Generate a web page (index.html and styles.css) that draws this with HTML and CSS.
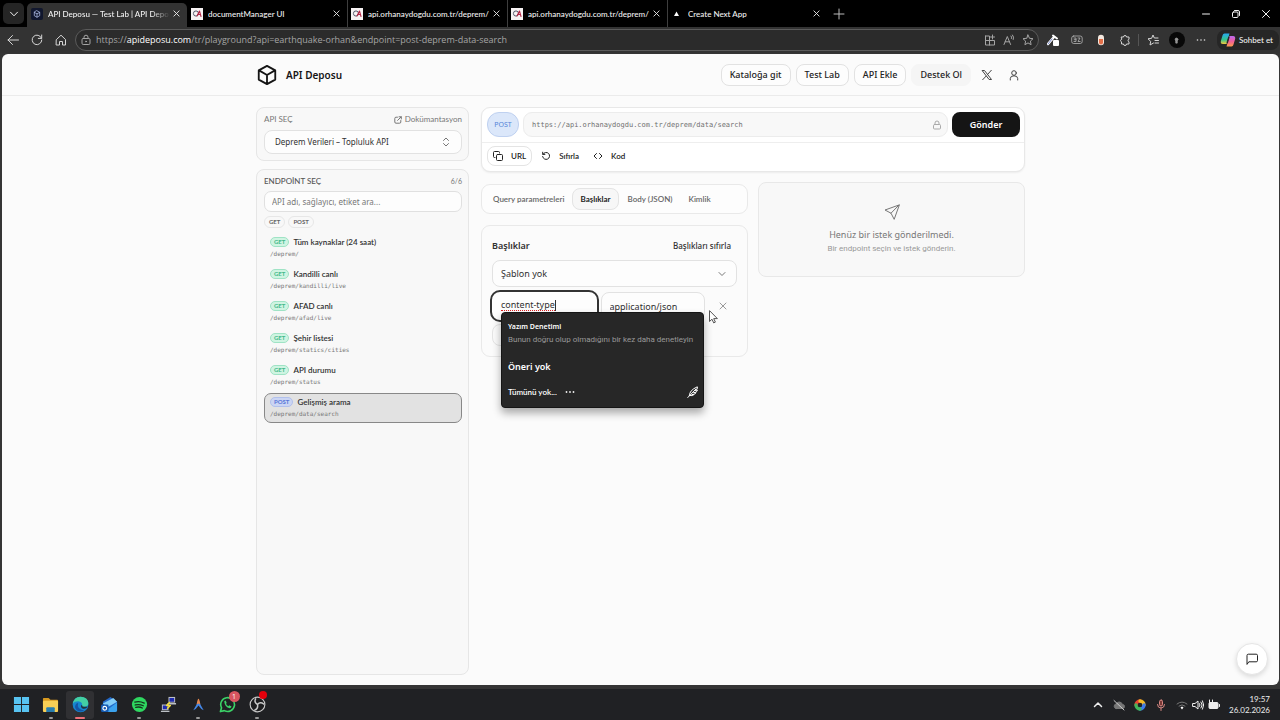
FILE: index.html
```html
<!DOCTYPE html>
<html lang="tr">
<head>
<meta charset="utf-8">
<title>API Deposu — Test Lab</title>
<link rel="stylesheet" href="styles.css">
</head>
<body>
<div class="tabstrip">
  <button class="tab-menu" aria-label="Sekmeler"><svg width="10" height="10" viewBox="0 0 10 10"><path d="M1.5 3.2 5 6.8l3.500-3.600"/></svg></button>
  <div class="tabs">
    <div class="tab tab-active">
      <svg class="fav" viewBox="0 0 12 12"><rect width="12" height="12" rx="2" fill="#11172e"/><path d="M6 2.800 8.700 4.300v3.400L6 9.200 3.300 7.700V4.300zM3.300 4.300 6 5.900l2.700-1.600M6 5.900v3.300" fill="none" stroke="#a9b7df" stroke-width=".8"/></svg>
      <span class="tab-title fade">API Deposu — Test Lab | API Depo</span>
      <button class="x" aria-label="Kapat"><svg viewBox="0 0 8 8"><path d="m1 1 6 6M7 1 1 7"/></svg></button>
    </div>
    <div class="tab">
      <svg class="fav" viewBox="0 0 12 12"><rect width="12" height="12" fill="#f6f2f3"/><circle cx="5" cy="5.500" r="2.600" fill="none" stroke="#555b6d"/><path d="m6 8 2.500-5L10 8.500M6.500 6.500h3" fill="none" stroke="#b52848" stroke-width="1.100"/></svg>
      <span class="tab-title">documentManager UI</span>
      <button class="x" aria-label="Kapat"><svg viewBox="0 0 8 8"><path d="m1 1 6 6M7 1 1 7"/></svg></button>
    </div>
    <div class="tab tab-line">
      <svg class="fav" viewBox="0 0 12 12"><rect width="12" height="12" fill="#f6f2f3"/><circle cx="5" cy="5.500" r="2.600" fill="none" stroke="#555b6d"/><path d="m6 8 2.500-5L10 8.500M6.500 6.500h3" fill="none" stroke="#b52848" stroke-width="1.100"/></svg>
      <span class="tab-title">api.orhanaydogdu.com.tr/deprem/</span>
      <button class="x" aria-label="Kapat"><svg viewBox="0 0 8 8"><path d="m1 1 6 6M7 1 1 7"/></svg></button>
    </div>
    <div class="tab tab-line">
      <svg class="fav" viewBox="0 0 12 12"><rect width="12" height="12" fill="#f6f2f3"/><circle cx="5" cy="5.500" r="2.600" fill="none" stroke="#555b6d"/><path d="m6 8 2.500-5L10 8.500M6.500 6.500h3" fill="none" stroke="#b52848" stroke-width="1.100"/></svg>
      <span class="tab-title">api.orhanaydogdu.com.tr/deprem/</span>
      <button class="x" aria-label="Kapat"><svg viewBox="0 0 8 8"><path d="m1 1 6 6M7 1 1 7"/></svg></button>
    </div>
    <div class="tab tab-line">
      <svg class="fav" viewBox="0 0 12 12"><path d="M5.500 3.500 8 8H3z" fill="#fff"/></svg>
      <span class="tab-title">Create Next App</span>
      <button class="x" aria-label="Kapat"><svg viewBox="0 0 8 8"><path d="m1 1 6 6M7 1 1 7"/></svg></button>
    </div>
  </div>
  <button class="new-tab" aria-label="Yeni sekme"><svg width="12" height="12" viewBox="0 0 12 12"><path d="M6 1v10M1 6h10"/></svg></button>
  <div class="win-controls">
    <button aria-label="Küçült"><svg viewBox="0 0 10 10"><path d="M1.500 5h7"/></svg></button>
    <button aria-label="Geri yükle"><svg viewBox="0 0 10 10"><rect x="1.500" y="3" width="5.500" height="5.500" rx="1"/><path d="M3.500 1.500H7a1.500 1.500 0 0 1 1.500 1.500v3.500"/></svg></button>
    <button aria-label="Kapat"><svg viewBox="0 0 10 10"><path d="m1.500 1.500 7 7M8.500 1.500l-7 7"/></svg></button>
  </div>
</div>

<div class="toolbar">
  <button class="nav-btn" aria-label="Geri"><svg viewBox="0 0 12 12"><path d="M11.500 6H1M5.500 1.500 1 6l4.500 4.500"/></svg></button>
  <button class="nav-btn" aria-label="Yenile"><svg viewBox="0 0 12 12"><path d="M10.500 4.200A4.800 4.800 0 1 0 10.800 6M10.700 1v3.400H7.300"/></svg></button>
  <button class="nav-btn" aria-label="Giriş"><svg viewBox="0 0 12 12"><path d="M1.500 5.500 6 1.200l4.500 4.300V11H7.500V7.500h-3V11h-3z"/></svg></button>
  <div class="address">
    <svg class="addr-ico" viewBox="0 0 12 12"><rect x="2" y="4.500" width="8" height="6" rx="1.200"/><path d="M4 4.500V3.200a2 2 0 0 1 4 0v1.300"/><circle cx="6" cy="7.500" r=".5"/></svg>
    <span class="url">https://<b>apideposu.com</b>/tr/playground?api=earthquake-orhan&amp;endpoint=post-deprem-data-search</span>
    <button aria-label="Uygulamalar"><svg class="addr-ico" viewBox="0 0 12 12"><path d="M1.500 2h4v9M1.500 2v9h9V6.500h-9M8.500 1v4M6.500 3h4"/></svg></button>
    <button aria-label="Sesli oku"><svg class="addr-ico" viewBox="0 0 12 12"><path d="M1 10.500 4.300 2.500l3.300 8M2.200 7.800h4.200M8 2q1 1 .5 2.500M9.500 1q1.800 2 .8 4.500"/></svg></button>
    <button aria-label="Sık kullanılan"><svg class="addr-ico" viewBox="0 0 12 12"><path d="m6 1 1.500 3.300 3.500.4-2.600 2.400.7 3.600L6 8.900l-3.100 1.800.7-3.600L1 4.700l3.500-.4z"/></svg></button>
  </div>
  <div class="extensions">
    <button aria-label="Renk seçici"><svg viewBox="0 0 12 12"><path d="m1 10 6-7" stroke="#fff" stroke-width="2.500"/><path d="m1 10 4-5" stroke="#5264ba" stroke-width=".8"/><path d="m6 1.500 4 3" stroke="#fff" stroke-width="2"/><rect x="6" y="6" width="6" height="6" rx="1" fill="#fff" stroke="none"/></svg></button>
    <button aria-label="Çeviri"><svg viewBox="0 0 12 12"><g stroke="#b5b5b5" stroke-width=".8"><rect x=".7" y="2" width="10.500" height="7.500" rx="2"/><path d="M3 4h2v3.500H3M3.200 5.700H5M7 4h2L7 7.500h2.200"/></g></svg></button>
    <button aria-label="Eklenti"><svg viewBox="0 0 12 12"><rect x="3" y=".8" width="6" height="10.400" rx="3" fill="#f3e8df" stroke="none"/><path d="M4 5h4v3.500a2 2 0 0 1-4 0z" fill="#e46f48" stroke="none"/></svg></button>
    <button aria-label="Uzantılar"><svg viewBox="0 0 12 12"><path d="M2.500 3h2a1.500 1.500 0 0 1 3 0h2.500v2.300a1.300 1.300 0 0 0 0 2.500V10H7.500a1.500 1.500 0 0 1-3 0h-2V7.800a1.300 1.300 0 0 1 0-2.500z"/></svg></button>
    <button class="line-left" aria-label="Favoriler"><svg viewBox="0 0 12 12"><path d="M6.500 9 3 11l.7-3.600L1 4.800l3.600-.5L6 1l1.300 3H11M8 6.500h3.500M8 9h3.500"/></svg></button>
    <button class="avatar" aria-label="Profil"><svg viewBox="0 0 12 12"><circle cx="6" cy="4.500" r="1.800"/><path d="M5 6v3.500h2V6"/></svg></button>
    <button aria-label="Ayarlar"><svg viewBox="0 0 12 12"><g fill="#ddd" stroke="none"><circle cx="2.500" cy="6" r=".8"/><circle cx="6" cy="6" r=".8"/><circle cx="9.500" cy="6" r=".8"/></g></svg></button>
  </div>
  <button class="copilot"><svg width="16" height="16" viewBox="0 0 16 16"><defs><linearGradient id="ca" x1="0" y1="0" x2="0" y2="1"><stop offset="0" stop-color="#27a7ef"/><stop offset=".6" stop-color="#35c58a"/><stop offset="1" stop-color="#f6c83c"/></linearGradient><linearGradient id="cb" x1="0" y1="0" x2="0" y2="1"><stop offset="0" stop-color="#b86af0"/><stop offset=".5" stop-color="#ef5d9b"/><stop offset="1" stop-color="#ff9a4a"/></linearGradient></defs><path d="M4.500 1.500h5L6.500 12H3Q0 12 1 8.500l1.500-5q.5-2 2-2z" fill="url(#ca)"/><path d="M11.500 14.500h-5L9.500 4H13q3 0 2 3.500l-1.500 5q-.5 2-2 2z" fill="url(#cb)"/><path d="m8.800 5.500-1.500 5" stroke="#292929" stroke-width="1.500"/></svg>Sohbet et</button>
</div>

<div class="frame">
<div class="page">
  <header class="site-header">
    <div class="container header-row">
      <a class="brand" href="#"><svg width="22" height="22" viewBox="0 0 24 24"><path d="M12 2 21 7v10l-9 5-9-5V7zM3.300 7 12 12l8.700-5M12 22V12"/></svg>API Deposu</a>
      <nav class="site-nav">
        <a class="pill" href="#">Kataloğa git</a>
        <a class="pill" href="#">Test Lab</a>
        <a class="pill" href="#">API Ekle</a>
        <a class="pill pill-soft" href="#">Destek Ol</a>
        <a class="icon-link" href="#" aria-label="X"><svg width="12" height="12" viewBox="0 0 12 12"><path d="M1.500 1.500h2l7 9h-2zM10.300 1.300 6.800 5.200M5.100 7.100l-3.400 3.600"/></svg></a>
        <a class="icon-link" href="#" aria-label="Hesap"><svg width="12" height="12" viewBox="0 0 12 12"><circle cx="6" cy="4" r="2.300"/><path d="M2.300 11V9.500q0-2.700 3.700-2.700t3.700 2.700V11"/></svg></a>
      </nav>
    </div>
  </header>

  <main class="container workspace">
    <aside class="sidebar">
      <section class="card api-card">
        <div class="card-head"><label for="api">API SEÇ</label>
          <a class="doc-link" href="#"><svg width="8" height="8" viewBox="0 0 8 8"><path d="M3.500 1.200H2A1.200 1.200 0 0 0 .8 2.400V6A1.200 1.200 0 0 0 2 7.200h3.600A1.200 1.200 0 0 0 6.800 6V4.500M5 .8h2.300V3M7.200.8 3.600 4.400"/></svg>Dokümantasyon</a></div>
        <div class="select-wrap"><select id="api" class="api-select"><option>Deprem Verileri – Topluluk API</option></select>
          <svg class="select-ico" width="10" height="10" viewBox="0 0 10 10"><path d="m2.500 3.500 2.500-2.500 2.500 2.500M2.500 6.500 5 9l2.500-2.500"/></svg></div>
      </section>

      <section class="card endpoint-card">
        <div class="card-head"><label class="strong-label" for="search">ENDPOİNT SEÇ</label><span>6/6</span></div>
        <input id="search" class="search" type="text" placeholder="API adı, sağlayıcı, etiket ara...">
        <div class="chips"><button>GET</button><button>POST</button></div>
        <ul class="endpoints">
          <li><button class="endpoint"><span class="ep-top"><span class="method get">GET</span>Tüm kaynaklar (24 saat)</span><span class="path">/deprem/</span></button></li>
          <li><button class="endpoint"><span class="ep-top"><span class="method get">GET</span>Kandilli canlı</span><span class="path">/deprem/kandilli/live</span></button></li>
          <li><button class="endpoint"><span class="ep-top"><span class="method get">GET</span>AFAD canlı</span><span class="path">/deprem/afad/live</span></button></li>
          <li><button class="endpoint"><span class="ep-top"><span class="method get">GET</span>Şehir listesi</span><span class="path">/deprem/statics/cities</span></button></li>
          <li><button class="endpoint"><span class="ep-top"><span class="method get">GET</span>API durumu</span><span class="path">/deprem/status</span></button></li>
          <li><button class="endpoint selected"><span class="ep-top"><span class="method post">POST</span>Gelişmiş arama</span><span class="path">/deprem/data/search</span></button></li>
        </ul>
      </section>
    </aside>

    <div class="content">
      <section class="request">
        <div class="request-row">
          <span class="verb">POST</span>
          <div class="url-field"><input type="text" aria-label="İstek adresi" readonly value="https://api.orhanaydogdu.com.tr/deprem/data/search"><svg width="10" height="10" viewBox="0 0 10 10"><rect x="1.500" y="4.500" width="7" height="4.500" rx="1"/><path d="M3 4.500V3a2 2 0 0 1 4 0v1.500"/></svg></div>
          <button class="send">Gönder</button>
        </div>
        <div class="action-row">
          <button class="action boxed"><svg viewBox="0 0 10 10"><rect x="3.500" y="3.500" width="6" height="6" rx="1"/><path d="M2 6.500H1.500a1 1 0 0 1-1-1v-4a1 1 0 0 1 1-1h4a1 1 0 0 1 1 1V2"/></svg>URL</button>
          <button class="action"><svg viewBox="0 0 10 10"><path d="M2 3.200A3.500 3.500 0 1 1 1.600 5.500M1.700 1.200v2.200h2.200"/></svg>Sıfırla</button>
          <button class="action"><svg viewBox="0 0 10 10"><path d="M3.500 2.500 1 5l2.500 2.500M6.500 2.500 9 5 6.500 7.500"/></svg>Kod</button>
        </div>
      </section>

      <div class="panels">
        <div class="params">
          <div class="tab-group" role="tablist">
            <button role="tab">Query parametreleri</button>
            <button role="tab" aria-selected="true" class="on">Başlıklar</button>
            <button role="tab">Body (JSON)</button>
            <button role="tab">Kimlik</button>
          </div>
          <section class="headers-card">
            <div class="headers-head"><h2>Başlıklar</h2><button>Başlıkları sıfırla</button></div>
            <div class="select-wrap"><select class="template" aria-label="Şablon"><option>Şablon yok</option></select>
              <svg class="select-ico" width="8" height="8" viewBox="0 0 8 8"><path d="M1 2.500 4 5.500l3-3"/></svg></div>
            <div class="pair">
              <div class="key-field">
                <div class="text-box focused" contenteditable="true" role="textbox" aria-label="Başlık adı" spellcheck="false"><span class="misspelt">content-type</span><span class="caret"></span></div>
                <div class="spell" role="dialog" aria-label="Yazım Denetimi">
                  <strong>Yazım Denetimi</strong>
                  <p>Bunun doğru olup olmadığını bir kez daha denetleyin</p>
                  <button class="suggest">Öneri yok</button>
                  <div class="spell-foot"><button>Tümünü yok...</button><button aria-label="Diğer"><svg width="10" height="10" viewBox="0 0 10 10"><g fill="#eee" stroke="none"><circle cx="1.500" cy="5" r=".9"/><circle cx="5" cy="5" r=".9"/><circle cx="8.500" cy="5" r=".9"/></g></svg></button>
                    <svg class="quill" width="12" height="12" viewBox="0 0 12 12"><path d="M.8 11.500 9 3M2.500 9.500Q2 4.500 10.300.8q.5 1.500-.5 2.700l-2 .8h2.700Q10 5.500 8.800 6.200l-2.300.5H9Q8 8.200 6.500 8.600H4.800h2Q6 10.300 2.500 9.500z"/></svg></div>
                </div>
              </div>
              <input class="text-box" type="text" aria-label="Değer" value="application/json">
              <button class="remove" aria-label="Sil"><svg width="8" height="8" viewBox="0 0 8 8"><path d="m1 1 6 6M7 1 1 7"/></svg></button>
              <svg class="cursor" width="10" height="14" viewBox="0 0 10 14"><path d="M1.500 1v10.500l2.500-2.300 1.700 3.700 1.700-.8-1.700-3.500H9z"/></svg>
            </div>
            <button class="add" aria-label="Başlık ekle"></button>
          </section>
        </div>

        <section class="empty">
          <svg width="18" height="18" viewBox="0 0 18 18"><path d="M16 2 2 7l6 3.200L11 16zM16 2 8 10.200"/></svg>
          <p>Henüz bir istek gönderilmedi.</p>
          <small>Bir endpoint seçin ve istek gönderin.</small>
        </section>
      </div>
    </div>
  </main>
  <button class="chat" aria-label="Sohbet"><svg width="14" height="14" viewBox="0 0 14 14"><path d="M2 12V3.500A1.300 1.300 0 0 1 3.300 2.200h7.900a1.300 1.300 0 0 1 1.300 1.300v5a1.300 1.300 0 0 1-1.300 1.300H4.200z"/></svg></button>
</div>
</div>

<footer class="taskbar">
  <div class="apps">
    <button aria-label="Başlat"><svg viewBox="0 0 18 18"><path d="M1 1h7.500v7.500H1zM9.500 1H17v7.500H9.500zM1 9.500h7.500V17H1zM9.500 9.500H17V17H9.500z" fill="#58c4f2"/></svg></button>
    <button class="running" aria-label="Dosya Gezgini"><svg viewBox="0 0 18 18"><path d="M1 3q0-1 1-1h5l2 2h7q1 0 1 1v3H1z" fill="#d99a20"/><rect x="1" y="5" width="16" height="12" rx="1" fill="#f9cf55"/><path d="M4.500 17v-4q0-1 1-1h7q1 0 1 1v4z" fill="#287eb0"/></svg></button>
    <button class="current" aria-label="Edge"><svg viewBox="0 0 18 18"><circle cx="9" cy="9" r="8.300" fill="#1685cf"/><path d="M1 8Q2 1 9 .7q8 .3 8.300 6.800 0 4-4.500 4-2.500 0-2-1.500Q11 6 6.500 5.500 2.500 5.500 1 8z" fill="#43cfa3"/><path d="M6.500 7.500Q4.500 14 13 15.300q-4 2.500-8-.3-3-3-1-6 1-1.500 2.500-1.500z" fill="#1455a5"/><path d="M10.800 10q-.5 1.500 2 1.500h4q-2 2.500-5 2-3-1-2-4z" fill="#22313b"/></svg></button>
    <button aria-label="Outlook"><svg viewBox="0 0 18 18"><path d="m2 6 8-5 7 5v10H2z" fill="#2368c7"/><path d="M2 8 13 2l4 4L7 12z" fill="#82cdf7"/><path d="m5 16 12-9v8q0 2-2 2H5z" fill="#3ba2ed"/><rect x="0" y="9" width="8" height="8" rx="1.500" fill="#155bb1"/><circle cx="4" cy="13" r="2" fill="none" stroke="#fff" stroke-width="1.200"/></svg></button>
    <button class="running" aria-label="Spotify"><svg viewBox="0 0 18 18"><circle cx="9" cy="9" r="8" fill="#2ed760"/><path d="M4 6.500q5-1.500 10 1M4.500 9.500q4.500-1.200 8.500.8M5 12q4-1 7 .7" fill="none" stroke="#15351d" stroke-width="1.400" stroke-linecap="round"/></svg></button>
    <button aria-label="PuTTY"><svg viewBox="0 0 18 18"><g fill="#bcc0c5"><rect x="9" y="1" width="7" height="6"/><rect x="2" y="9" width="7" height="6"/><path d="M8 7.500h9V9H8zM1 15.500h9V17H1z"/></g><path d="M10 2h5v4h-5zM3 10h5v4H3z" fill="#1e2bb0"/><path d="m10 7-3 3h4l-3 3" fill="none" stroke="#f0dc40" stroke-width="1.500"/></svg></button>
    <button class="running" aria-label="Antigravity"><svg viewBox="0 0 18 18"><path d="M3.500 15Q7 10 9 4q2 6 5.500 11-3-1-5.500-5-2.500 4-5.500 5z" fill="#4387e8"/><path d="M7 9Q8 3 9 3t2 6L9 8z" fill="#e5884d"/></svg></button>
    <button aria-label="WhatsApp"><svg viewBox="0 0 18 18"><path d="m1.500 16.500 1.200-4A7.300 7.300 0 1 1 5.700 15.500z" fill="none" stroke="#3bd267" stroke-width="1.700"/><path d="m5.500 5.500 1.500-.8 1.200 2.600-.8 1q.8 1.700 2.500 2.500l1-1 2.400 1.300q-.5 1.800-2 1.900-5-.8-5.800-7.500z" fill="#3bd267"/></svg><span class="badge">1</span></button>
    <button class="running" aria-label="OBS Studio"><svg viewBox="0 0 18 18"><circle cx="9" cy="9" r="7.800" fill="#1d1d1f" stroke="#c9c9c9" stroke-width="1.200"/><path d="M9 9q-4-2-2-6M9 9q3-3.500 6.500-.5M9 9q1 4.500-3 6" fill="none" stroke="#c9c9c9" stroke-width="1.500"/></svg><span class="badge dot"></span></button>
  </div>
  <div class="tray">
    <svg viewBox="0 0 12 12"><path d="m2.500 7.500 3.500-3.500 3.500 3.500" stroke-width="1.500"/></svg>
    <svg viewBox="0 0 12 12"><path d="M3 9.500h6.500a2 2 0 0 0 0-4A3.500 3.500 0 0 0 3 5a2.300 2.300 0 0 0 0 4.500z" fill="#777" stroke="#777"/><path d="m1 1.500 10 9.500" stroke="#ccc"/></svg>
    <svg viewBox="0 0 12 12"><g fill="none" stroke-width="3.300"><path d="M2 6a4 4 0 0 1 4-4" stroke="#e94235"/><path d="M6 2a4 4 0 0 1 4 4" stroke="#f3bb25"/><path d="M10 6a4 4 0 0 1-4 4" stroke="#3c7cec"/><path d="M6 10a4 4 0 0 1-4-4" stroke="#42b65b"/></g></svg>
    <svg viewBox="0 0 12 12"><g stroke="#d98984"><rect x="4.500" y="1" width="3" height="6" rx="1.500" fill="#7b3936"/><path d="M2.500 5.500a3.500 3.500 0 0 0 7 0M6 9v2.500"/></g></svg>
    <div class="status">
      <svg viewBox="0 0 12 12"><path d="M1 5q5-4 10 0M3 7q3-2.500 6 0" stroke="#777"/><path d="m4.500 8.500 1.500-1 1.500 1L6 10.500z" fill="#fff" stroke="none"/></svg>
      <svg viewBox="0 0 12 12"><path d="M1 4.500h2L6 2v8L3 7.500H1zM7.500 4.500q1.200 1.500 0 3M9 3q2.500 3 0 6M10.500 1.800q2.500 4.200 0 8.400"/></svg>
      <svg viewBox="0 0 12 12"><rect x="1" y="3.500" width="9" height="6" rx="1" fill="#eee"/><path d="M11.500 5.500v2M1.500 1v3.500h3V1"/></svg>
    </div>
    <div class="clock"><time>19:57</time><time>26.02.2026</time></div>
  </div>
</footer>
</body>
</html>
```
FILE: styles.css
```css
* { box-sizing: border-box; }
html, body { height: 100%; }
body {
  margin: 0;
  min-height: 100vh;
  display: flex;
  flex-direction: column;
  background: #353535;
  color: #303030;
  font-family: "Noto Sans", sans-serif;
  font-size: 9px;
  line-height: 12px;
}
button, input, select { font: inherit; color: inherit; margin: 0; }
button { border: 0; padding: 0; background: none; }
a { color: inherit; text-decoration: none; }
svg { flex: none; fill: none; stroke: currentColor; stroke-linecap: round; stroke-linejoin: round; display: block; }
h2, p, ul { margin: 0; padding: 0; }
ul { list-style: none; }

/* Browser tabs */
.tabstrip { display: flex; align-items: center; height: 27px; background: #000; color: #f2f2f2; padding-left: 3px; font-family: Lato, sans-serif; font-size: 8px; font-weight: 500; flex: none; }
.tab-menu { display: grid; place-items: center; width: 21px; height: 21px; border-radius: 5px; background: #252525; margin-right: 3px; }
.tabs { display: flex; align-self: stretch; }
.tab { position: relative; display: flex; align-items: center; width: 160px; padding: 3px 5px 3px 4px; }
.tab-active { background: #333; border-radius: 5px 5px 0 0; margin-top: 3px; padding-top: 0; }
.tab-line { border-left: 1px solid #3e3e3e; padding-left: 3px; }
.fav { width: 12px; height: 12px; stroke: none; margin-right: 5px; }
.tab-title { flex: 1; min-width: 0; overflow: hidden; white-space: nowrap; }
.fade { mask-image: linear-gradient(to right, #000 85%, transparent); }
.x { width: 12px; display: grid; place-items: center; }
.x svg { width: 7px; height: 7px; }
.new-tab { margin-left: 6px; color: #bbb; }
.win-controls { margin-left: auto; display: flex; gap: 20px; padding-right: 9px; }
.win-controls svg { width: 10px; height: 10px; }

/* Browser toolbar */
.toolbar { display: flex; align-items: center; height: 26px; background: #333; color: #d6d6d6; padding: 0 1px 0 7px; font-family: "Open Sans", sans-serif; flex: none; }
.nav-btn { width: 12px; margin-right: 12px; }
.nav-btn svg { width: 12px; height: 12px; }
.address { flex: 1; min-width: 0; display: flex; align-items: center; gap: 7px; height: 22px; border: 1px solid #5b5b5b; border-radius: 11px; background: #2b2b2b; margin-left: -4px; padding: 0 4px; color: #a5a5a5; }
.addr-ico { width: 12px; height: 12px; }
.url { flex: 1; overflow: hidden; white-space: nowrap; margin-left: -3px; }
.url b { color: #fff; font-weight: 400; }
.extensions { display: flex; align-items: center; gap: 12px; margin: 0 10px 0 8px; }
.extensions svg { width: 12px; height: 12px; }
.line-left { border-left: 1px solid #555; padding-left: 8px; margin-left: -5px; }
.avatar { display: grid; place-items: center; width: 16px; height: 16px; border-radius: 50%; background: #080808; margin: 0 -2px; }
.extensions .avatar svg { width: 9px; height: 9px; fill: #999; stroke: #999; }
.copilot { display: flex; align-items: center; gap: 3px; height: 20px; padding: 0 6px 0 3px; border-radius: 8px; background: #262626; color: #f0f0f0; font-family: Lato, sans-serif; font-size: 8px; font-weight: 500; white-space: nowrap; }
.copilot svg { stroke: none; }

/* Page */
.frame { flex: 1; display: flex; min-height: 0; padding: 1px 1px 4px 2px; }
.page { flex: 1; position: relative; display: flex; flex-direction: column; border-radius: 6px; background: #fbfbfb; }
.container { width: 100%; max-width: 769px; margin: 0 auto; }
.site-header { height: 42px; border-bottom: 1px solid #ebebeb; display: flex; flex: none; }
.header-row { display: flex; align-items: center; justify-content: space-between; }
.brand { display: flex; align-items: center; gap: 8px; font-size: 10px; font-weight: 600; color: #151515; }
.brand svg { stroke-width: 2; }
.site-nav { display: flex; align-items: center; gap: 5px; color: #222; }
.pill { height: 22px; padding: 4px 8px; border: 1px solid #e2e2e2; border-radius: 8px; font-weight: 500; background: #fdfdfd; }
.pill-soft { border-color: #f5f5f5; background: #f5f5f5; }
.icon-link { width: 22px; display: grid; place-items: center; color: #444; }

.workspace { flex: 1; min-height: 0; display: grid; grid-template-columns: 213px minmax(0, 1fr); gap: 12px; padding: 11px 0 10px; }
.sidebar { display: flex; flex-direction: column; gap: 8px; }
.card { border: 1px solid #e6e6e6; border-radius: 8px; background: #f8f8f8; padding: 6px 6px 6px 7px; }
.endpoint-card { flex: 1; }
.card-head { display: flex; justify-content: space-between; font-family: Lato, sans-serif; font-size: 8px; line-height: 11px; color: #777; margin-bottom: 5px; }
.endpoint-card .card-head { margin-bottom: 4px; }
.card-head span { font-size: 7px; }
.strong-label { font-weight: 500; color: #555; }
.doc-link { display: flex; align-items: center; gap: 3px; }
.select-wrap { position: relative; display: flex; }
.select-wrap select { appearance: none; width: 100%; border: 1px solid #e2e2e2; border-radius: 8px; background: #fdfdfd; }
.select-ico { position: absolute; top: 0; bottom: 0; right: 11px; margin: auto 0; color: #777; }
.api-select { height: 24px; padding: 0 10px; font-size: 8px; }
.search { display: block; width: 100%; height: 21px; border: 1px solid #e0e0e0; border-radius: 7px; background: #fdfdfd; padding: 0 7px; font-size: 8px; }
.search::placeholder { color: #777; opacity: 1; }
.chips { display: flex; gap: 3px; margin: 4px 0 5px; }
.chips button { height: 12px; border: 1px solid #e7e7e7; border-radius: 6px; padding: 0 4px; font-family: Lato, sans-serif; font-size: 6px; line-height: 10px; font-weight: 700; color: #666; }
.endpoints { display: grid; gap: 2px; }
.endpoint { width: 100%; height: 30px; display: block; text-align: left; border: 1px solid transparent; border-radius: 7px; padding: 2px 5px; font-family: Lato, sans-serif; font-size: 8px; line-height: 12px; font-weight: 600; }
.selected { background: #e2e2e2; border-color: #888; }
.ep-top { display: flex; align-items: center; gap: 4px; }
.method { border: 1px solid; border-radius: 6px; padding: 0 3px; font-size: 6px; line-height: 8px; font-weight: 700; }
.get { background: #cff4e2; border-color: #9fe3c5; color: #45b88a; }
.post { background: #cbd5f3; border-color: #b1c0ec; color: #5875d8; }
.path { display: block; font-family: "DejaVu Sans Mono", monospace; font-size: 6px; font-weight: 400; color: #777; }

.request { border: 1px solid #e8e8e8; border-radius: 9px; background: #fff; box-shadow: 0 1px 2px #00000010; }
.request-row { display: flex; gap: 4px; padding: 4px 4px 5px 5px; border-bottom: 1px solid #eee; }
.verb { width: 32px; height: 25px; border: 1px solid #bfd1f0; border-radius: 12px; background: #dbe7fa; color: #5485d8; text-align: center; font-size: 7px; line-height: 23px; }
.url-field { flex: 1; display: flex; align-items: center; border: 1px solid #ececec; border-radius: 9px; background: #f8f8f8; padding: 0 5px 0 8px; color: #aaa; }
.url-field input { flex: 1; min-width: 0; border: 0; padding: 0; background: none; font-family: "DejaVu Sans Mono", monospace; font-size: 7px; color: #707070; }
.send { width: 68px; height: 25px; border-radius: 8px; background: #151515; color: #fff; font-weight: 600; }
.action-row { display: flex; padding: 3px 5px 5px; }
.action { display: flex; align-items: center; gap: 8px; height: 20px; padding: 0 5px; font-family: Lato, sans-serif; font-size: 8px; font-weight: 600; color: #222; margin-right: 4px; }
.action svg { width: 10px; height: 10px; }
.boxed { border: 1px solid #e4e4e4; border-radius: 8px; }

.panels { display: grid; grid-template-columns: 267px minmax(0, 1fr); gap: 10px; margin-top: 10px; align-items: start; }
.tab-group { display: flex; height: 30px; padding: 3px; border: 1px solid #e9e9e9; border-radius: 9px; background: #fdfdfd; margin: 2px 0 11px; font-family: Lato, sans-serif; font-size: 8px; color: #666; }
.tab-group button { padding: 0 7px; border: 1px solid transparent; border-radius: 8px; font-weight: 600; white-space: nowrap; }
.tab-group .on { border-color: #e4e4e4; background: #f7f7f7; color: #222; font-weight: 700; margin-right: 1px; }
.headers-card { border: 1px solid #e9e9e9; border-radius: 9px; padding: 10px; }
.headers-head { display: flex; align-items: center; justify-content: space-between; padding-right: 6px; margin: 4px 0 8px; }
.headers-head h2 { font-size: 9px; line-height: 12px; font-weight: 600; }
.headers-head button { font-size: 8px; font-weight: 500; }
.template { height: 27px; padding: 0 8px; }
.pair { position: relative; display: grid; grid-template-columns: minmax(0, 1fr) minmax(0, 1fr) 28px; gap: 4px; margin: 5px 0 4px; }
.key-field { position: relative; }
.text-box { width: 100%; height: 28px; border: 1px solid #e2e2e2; border-radius: 8px; background: #fdfdfd; padding: 0 8px; line-height: 26px; }
.focused { outline: 2px solid #333; border-color: #fff; white-space: nowrap; line-height: 24px; }
.misspelt { display: inline-block; line-height: 11px; border-bottom: 1px dotted #d22; }
.caret { display: inline-block; width: 1px; height: 11px; background: #333; vertical-align: middle; }
.remove { display: grid; place-items: center; color: #999; }
.cursor { position: absolute; right: 19px; top: 18px; fill: #fff; stroke: #555; }
.add { display: block; height: 22px; width: 60px; border: 1px solid #e4e4e4; border-radius: 8px; }
.spell { position: absolute; z-index: 2; left: 9px; top: 20px; width: 203px; height: 96px; border: 1px solid #151515; border-radius: 4px; background: #272727; color: #fff; padding: 8px 4px 7px 6px; box-shadow: 0 5px 8px #0005; display: flex; flex-direction: column; align-items: flex-start; }
.spell strong { font-size: 7px; line-height: 12px; font-weight: 600; }
.spell p { font-family: Roboto, sans-serif; font-size: 8px; line-height: 14px; color: #999; white-space: nowrap; }
.suggest { font-weight: 600; margin-top: 13px; line-height: 14px; }
.spell-foot { align-self: stretch; display: flex; align-items: center; gap: 8px; margin-top: 12px; font-family: Lato, sans-serif; font-size: 8px; font-weight: 600; }
.quill { margin-left: auto; }
.empty { height: 95px; border: 1px solid #e8e8e8; border-radius: 8px; background: #f8f8f8; display: flex; flex-direction: column; align-items: center; padding-top: 20px; color: #777; }
.empty p { line-height: 14px; margin-top: 7px; }
.empty small { font-family: Roboto, sans-serif; font-size: 8px; line-height: 14px; color: #999; }
.chat { position: absolute; right: 11px; bottom: 10px; width: 32px; height: 32px; display: grid; place-items: center; border: 1px solid #e6e6e6; border-radius: 50%; background: #fff; box-shadow: 0 2px 5px #0002; color: #222; }

/* Taskbar */
.taskbar { display: flex; align-items: center; justify-content: space-between; height: 31px; flex: none; background: #202124; color: #eee; padding: 0 10px 0 7px; font-family: "Open Sans", sans-serif; }
.apps { display: flex; justify-content: space-between; width: 264px; }
.apps button { position: relative; display: grid; place-items: center; width: 28px; height: 28px; border-radius: 3px; }
.apps svg { width: 17px; height: 17px; stroke: none; }
.running::after, .current::after { content: ""; position: absolute; bottom: 0; left: 12px; width: 4px; height: 2px; border-radius: 1px; background: #999; }
.current { background: #303033; }
.current::after { left: 9px; width: 10px; background: #ee7079; }
.badge { position: absolute; top: 0; right: 2px; width: 11px; height: 11px; border-radius: 50%; background: #d85560; color: #fff; font-size: 7px; line-height: 11px; }
.dot { width: 8px; height: 8px; right: 4px; background: #e4000b; }
.tray { display: flex; align-items: center; gap: 9px; }
.tray svg { width: 12px; height: 12px; }
.status { display: flex; gap: 4px; }
.clock { display: flex; flex-direction: column; text-align: right; font-family: Lato, sans-serif; font-size: 8px; line-height: 11px; }
```
